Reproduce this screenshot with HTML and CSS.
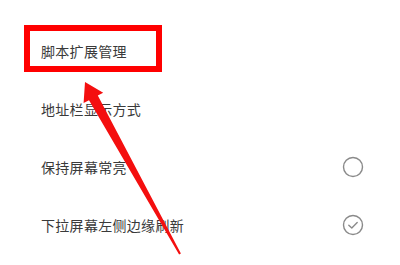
FILE: index.html
```html
<!DOCTYPE html>
<html lang="zh-CN">
<head>
<meta charset="utf-8">
<link rel="stylesheet" href="styles.css">
</head>
<body>
<div class="page">
  <ul class="list">
    <li class="row"><span class="label">脚本扩展管理</span></li>
    <li class="row"><span class="label">地址栏显示方式</span></li>
    <li class="row">
      <span class="label">保持屏幕常亮</span>
      <svg class="radio" viewBox="0 0 22 22" width="22" height="22"><circle cx="11" cy="11" r="9.5" fill="none" stroke="#8a8a8a" stroke-width="1.4"/></svg>
    </li>
    <li class="row">
      <span class="label">下拉屏幕左侧边缘刷新</span>
      <svg class="radio" viewBox="0 0 22 22" width="22" height="22"><circle cx="11" cy="11" r="9.5" fill="none" stroke="#8a8a8a" stroke-width="1.4"/><path d="M6.8 11.2 L9.8 14 L15.2 8.6" fill="none" stroke="#8a8a8a" stroke-width="1.4" stroke-linecap="round" stroke-linejoin="round"/></svg>
    </li>
  </ul>
  <div class="highlight"></div>
  <svg class="arrow" viewBox="0 0 400 265" width="400" height="265">
    <polygon fill="#f40f0f" points="85,82 103.2,92.7 97.8,95.6 180.9,253.5 179.1,254.5 89.0,100.3 83.6,103"/>
  </svg>
</div>
</body>
</html>
```

FILE: styles.css
```css
html, body {
  margin: 0;
  padding: 0;
  background: #fff;
}
.page {
  position: relative;
  width: 400px;
  height: 265px;
  overflow: hidden;
  font-family: "Noto Sans CJK SC", "Noto Sans", sans-serif;
}
.list {
  list-style: none;
  margin: 0;
  padding: 22px 0 0 0;
  display: flex;
  flex-direction: column;
}
.row {
  height: 58px;
  display: flex;
  align-items: center;
  justify-content: space-between;
  padding: 0 36px 0 41px;
}
.label {
  font-size: 14px;
  color: #3a3a3a;
  letter-spacing: 0.3px;
}
.radio {
  display: block;
}
.highlight {
  position: absolute;
  left: 24px;
  top: 25px;
  width: 126px;
  height: 35px;
  border: 6px solid #ff0000;
}
.arrow {
  position: absolute;
  left: 0;
  top: 0;
}
```
